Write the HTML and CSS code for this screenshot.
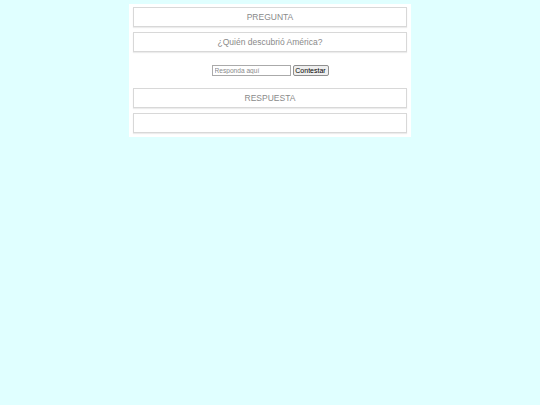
FILE: index.html
```html
<!DOCTYPE html>
<html>
<head>
<meta charset="utf-8">
<link rel="stylesheet" href="styles.css">
</head>
<body>
<div class="card">
  <div class="box">PREGUNTA</div>
  <div class="box">¿Quién descubrió América?</div>
  <form class="answer">
    <input class="field" type="text" placeholder="Responda aquí">
    <button class="btn" type="button">Contestar</button>
  </form>
  <div class="box">RESPUESTA</div>
  <div class="box"></div>
</div>
</body>
</html>
```

FILE: styles.css
```css
html, body {
  margin: 0;
  padding: 0;
  background: #e0ffff;
}
body {
  font-family: "Liberation Sans", Arial, sans-serif;
}
.card {
  width: 274px;
  margin: 4px auto 0;
  padding: 3px 4px 4px;
  background: #ffffff;
  display: flex;
  flex-direction: column;
  gap: 5px;
}
.box {
  height: 18px;
  line-height: 19px;
  border: 1px solid #d8d8d8;
  box-shadow: 0 1px 1px #ececec;
  text-align: center;
  font-size: 8.5px;
  color: #8a8a8a;
}
.answer {
  margin: 8px 0 7px;
  display: flex;
  justify-content: center;
  align-items: center;
  gap: 2px;
  height: 11px;
}
.field {
  box-sizing: border-box;
  width: 79px;
  height: 11px;
  padding: 0 2px;
  border: 1px solid #aaaaaa;
  font-family: "Liberation Sans", Arial, sans-serif;
  font-size: 6.6px;
  color: #333;
  margin: 0;
}
.field::placeholder {
  color: #8a8a8a;
}
.btn {
  box-sizing: border-box;
  width: 36px;
  height: 11px;
  padding: 0;
  margin: 0;
  border: 1px solid #8f8f8f;
  border-radius: 2px;
  background: #efefef;
  font-family: "Liberation Sans", Arial, sans-serif;
  font-size: 7px;
  color: #000;
  line-height: 9px;
}
```
